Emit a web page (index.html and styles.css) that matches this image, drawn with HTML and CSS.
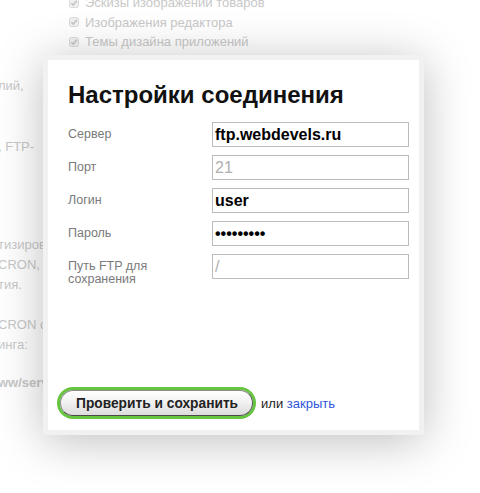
FILE: index.html
```html
<!DOCTYPE html>
<html lang="ru">
<head>
<meta charset="utf-8">
<title>Настройки соединения</title>
<link rel="stylesheet" href="styles.css">
</head>
<body>
<div class="page">
  <ul class="checks">
    <li><svg class="cb" viewBox="0 0 10 10" width="10" height="10"><rect x="0.5" y="0.5" width="9" height="9" rx="2" fill="#f0f0f0" stroke="#dadada"/><path d="M2.3 5.2 L4.2 7.1 L7.8 2.8" fill="none" stroke="#c4c4c4" stroke-width="1.5"/></svg>Эскизы изображений товаров</li>
    <li><svg class="cb" viewBox="0 0 10 10" width="10" height="10"><rect x="0.5" y="0.5" width="9" height="9" rx="2" fill="#f0f0f0" stroke="#dadada"/><path d="M2.3 5.2 L4.2 7.1 L7.8 2.8" fill="none" stroke="#c4c4c4" stroke-width="1.5"/></svg>Изображения редактора</li>
    <li><svg class="cb" viewBox="0 0 10 10" width="10" height="10"><rect x="0.5" y="0.5" width="9" height="9" rx="2" fill="#f0f0f0" stroke="#dadada"/><path d="M2.3 5.2 L4.2 7.1 L7.8 2.8" fill="none" stroke="#c4c4c4" stroke-width="1.5"/></svg>Темы дизайна приложений</li>
  </ul>
  <div class="side">
    <p class="s1">лий,</p>
    <p class="s2">, FTP-</p>
    <p class="s3">тизировать резервное</p>
    <p>CRON, который</p>
    <p>тия.</p>
    <p class="s4">CRON с помощью</p>
    <p>инга:</p>
    <p class="s5 bold">ww/server/backup</p>
  </div>

  <div class="dialog">
    <div class="dialog-inner">
      <h1 class="title">Настройки соединения</h1>
      <form class="form">
        <div class="row"><label class="lbl">Сервер</label><input class="inp" type="text" value="ftp.webdevels.ru"></div>
        <div class="row"><label class="lbl">Порт</label><input class="inp" type="text" placeholder="21"></div>
        <div class="row"><label class="lbl">Логин</label><input class="inp" type="text" value="user"></div>
        <div class="row"><label class="lbl">Пароль</label><input class="inp" type="password" value="123456789"></div>
        <div class="row"><label class="lbl">Путь FTP для сохранения</label><input class="inp" type="text" placeholder="/"></div>
      </form>
      <div class="footer">
        <button class="btn" type="button">Проверить и сохранить</button>
        <span class="or">или <a class="close" href="#">закрыть</a></span>
      </div>
    </div>
  </div>
</div>
</body>
</html>
```

FILE: styles.css
```css
html, body {
  margin: 0;
  padding: 0;
  background: #ffffff;
}
body {
  width: 480px;
  height: 493px;
  overflow: hidden;
  font-family: "Liberation Sans", Arial, sans-serif;
}
.page {
  position: relative;
  display: flow-root;
  width: 480px;
  height: 493px;
  color: #c8c8c8;
  font-size: 13px;
}
.checks {
  list-style: none;
  margin: -7px 0 0 69px;
  padding: 0;
  line-height: 19.5px;
  font-size: 13px;
}
.checks li {
  display: flex;
  align-items: center;
}
.cb {
  margin-right: 6px;
  flex: none;
}
.side {
  margin-left: -2px;
  line-height: 20px;
  font-size: 13px;
}
.side p {
  margin: 0;
  white-space: nowrap;
}
.side .s1 { margin-top: 24px; }
.side .s2 { margin-top: 41px; }
.side .s3 { margin-top: 78px; }
.side .s4 { margin-top: 20px; }
.side .s5 { margin-top: 18px; }
.side .bold { font-weight: bold; }

.dialog {
  position: absolute;
  left: 43px;
  top: 55px;
  width: 381px;
  height: 380px;
  box-sizing: border-box;
  border: 5px solid #f1f1f1;
  border-radius: 4px;
  background: #ffffff;
  box-shadow: 0 6px 48px rgba(0, 0, 0, 0.26);
}
.dialog-inner {
  height: 100%;
  display: flex;
  flex-direction: column;
  color: #222;
}
.title {
  margin: 21px 0 0 20px;
  font-size: 24px;
  line-height: 28px;
  font-weight: bold;
  color: #111;
}
.form {
  margin: 13px 0 0 20px;
  display: flex;
  flex-direction: column;
  gap: 8px;
}
.row {
  display: flex;
  align-items: flex-start;
}
.lbl {
  width: 144px;
  flex: none;
  padding-top: 6px;
  padding-right: 10px;
  box-sizing: border-box;
  font-size: 12.5px;
  line-height: 13px;
  color: #7a7a7a;
}
.inp {
  width: 197px;
  height: 25px;
  box-sizing: border-box;
  margin: 0;
  padding: 0 2px;
  border: 1px solid #bcbcbc;
  border-radius: 0;
  font-family: "Liberation Sans", Arial, sans-serif;
  font-size: 16px;
  font-weight: bold;
  color: #000;
  background: #fff;
  outline: none;
}
.inp::placeholder {
  color: #b0b0b0;
  font-weight: normal;
}
.footer {
  margin-top: auto;
  padding: 0 0 14px 12px;
  display: flex;
  align-items: center;
}
.btn {
  height: 26px;
  padding: 0 14px 0 15px;
  margin: 0;
  border: 1px solid #8a8a8a;
  border-bottom-color: #4a4a4a;
  border-right-color: #555;
  border-radius: 13px;
  background: linear-gradient(#ffffff, #f2f2f2 45%, #dcdcdc);
  box-shadow: 0 0 0 3px #66c53f;
  font-family: "Liberation Sans", Arial, sans-serif;
  font-size: 13.75px;
  font-weight: bold;
  color: #222;
  cursor: pointer;
}
.or {
  margin-left: 8px;
  font-size: 13px;
  color: #222;
}
.close {
  color: #2f55dc;
  text-decoration: none;
}
```
